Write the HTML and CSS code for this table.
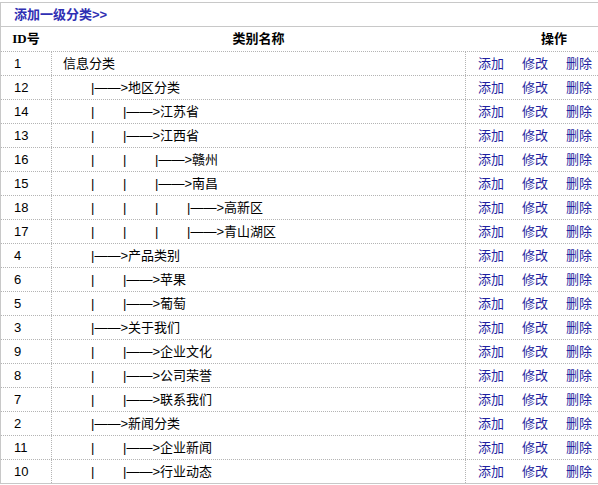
FILE: index.html
```html
<!DOCTYPE html>
<html lang="zh-CN">
<head>
<meta charset="utf-8">
<title>分类管理</title>
<link rel="stylesheet" href="styles.css">
</head>
<body>
<div class="grid">
  <div class="title"><a href="#">添加一级分类&gt;&gt;</a></div>
  <div class="row head">
    <div class="c-id">ID号</div>
    <div class="c-name">类别名称</div>
    <div class="c-ops">操作</div>
  </div>

  <div class="row"><div class="c-id">1</div><div class="c-name">信息分类</div><div class="c-ops"><a href="#">添加</a><a href="#">修改</a><a href="#">删除</a></div></div>
  <div class="row"><div class="c-id">12</div><div class="c-name"><span class="lead"></span><span class="arrow">|——&gt;</span>地区分类</div><div class="c-ops"><a href="#">添加</a><a href="#">修改</a><a href="#">删除</a></div></div>
  <div class="row"><div class="c-id">14</div><div class="c-name"><span class="lead"></span><span class="pipe">|</span><span class="arrow">|——&gt;</span>江苏省</div><div class="c-ops"><a href="#">添加</a><a href="#">修改</a><a href="#">删除</a></div></div>
  <div class="row"><div class="c-id">13</div><div class="c-name"><span class="lead"></span><span class="pipe">|</span><span class="arrow">|——&gt;</span>江西省</div><div class="c-ops"><a href="#">添加</a><a href="#">修改</a><a href="#">删除</a></div></div>
  <div class="row"><div class="c-id">16</div><div class="c-name"><span class="lead"></span><span class="pipe">|</span><span class="pipe">|</span><span class="arrow">|——&gt;</span>赣州</div><div class="c-ops"><a href="#">添加</a><a href="#">修改</a><a href="#">删除</a></div></div>
  <div class="row"><div class="c-id">15</div><div class="c-name"><span class="lead"></span><span class="pipe">|</span><span class="pipe">|</span><span class="arrow">|——&gt;</span>南昌</div><div class="c-ops"><a href="#">添加</a><a href="#">修改</a><a href="#">删除</a></div></div>
  <div class="row"><div class="c-id">18</div><div class="c-name"><span class="lead"></span><span class="pipe">|</span><span class="pipe">|</span><span class="pipe">|</span><span class="arrow">|——&gt;</span>高新区</div><div class="c-ops"><a href="#">添加</a><a href="#">修改</a><a href="#">删除</a></div></div>
  <div class="row"><div class="c-id">17</div><div class="c-name"><span class="lead"></span><span class="pipe">|</span><span class="pipe">|</span><span class="pipe">|</span><span class="arrow">|——&gt;</span>青山湖区</div><div class="c-ops"><a href="#">添加</a><a href="#">修改</a><a href="#">删除</a></div></div>
  <div class="row"><div class="c-id">4</div><div class="c-name"><span class="lead"></span><span class="arrow">|——&gt;</span>产品类别</div><div class="c-ops"><a href="#">添加</a><a href="#">修改</a><a href="#">删除</a></div></div>
  <div class="row"><div class="c-id">6</div><div class="c-name"><span class="lead"></span><span class="pipe">|</span><span class="arrow">|——&gt;</span>苹果</div><div class="c-ops"><a href="#">添加</a><a href="#">修改</a><a href="#">删除</a></div></div>
  <div class="row"><div class="c-id">5</div><div class="c-name"><span class="lead"></span><span class="pipe">|</span><span class="arrow">|——&gt;</span>葡萄</div><div class="c-ops"><a href="#">添加</a><a href="#">修改</a><a href="#">删除</a></div></div>
  <div class="row"><div class="c-id">3</div><div class="c-name"><span class="lead"></span><span class="arrow">|——&gt;</span>关于我们</div><div class="c-ops"><a href="#">添加</a><a href="#">修改</a><a href="#">删除</a></div></div>
  <div class="row"><div class="c-id">9</div><div class="c-name"><span class="lead"></span><span class="pipe">|</span><span class="arrow">|——&gt;</span>企业文化</div><div class="c-ops"><a href="#">添加</a><a href="#">修改</a><a href="#">删除</a></div></div>
  <div class="row"><div class="c-id">8</div><div class="c-name"><span class="lead"></span><span class="pipe">|</span><span class="arrow">|——&gt;</span>公司荣誉</div><div class="c-ops"><a href="#">添加</a><a href="#">修改</a><a href="#">删除</a></div></div>
  <div class="row"><div class="c-id">7</div><div class="c-name"><span class="lead"></span><span class="pipe">|</span><span class="arrow">|——&gt;</span>联系我们</div><div class="c-ops"><a href="#">添加</a><a href="#">修改</a><a href="#">删除</a></div></div>
  <div class="row"><div class="c-id">2</div><div class="c-name"><span class="lead"></span><span class="arrow">|——&gt;</span>新闻分类</div><div class="c-ops"><a href="#">添加</a><a href="#">修改</a><a href="#">删除</a></div></div>
  <div class="row"><div class="c-id">11</div><div class="c-name"><span class="lead"></span><span class="pipe">|</span><span class="arrow">|——&gt;</span>企业新闻</div><div class="c-ops"><a href="#">添加</a><a href="#">修改</a><a href="#">删除</a></div></div>
  <div class="row last"><div class="c-id">10</div><div class="c-name"><span class="lead"></span><span class="pipe">|</span><span class="arrow">|——&gt;</span>行业动态</div><div class="c-ops"><a href="#">添加</a><a href="#">修改</a><a href="#">删除</a></div></div>
</div>
</body>
</html>
```

FILE: styles.css
```css
html, body {
  margin: 0;
  padding: 0;
  background: #fff;
}

body {
  font-family: "Liberation Sans", "Noto Sans CJK SC", sans-serif;
  font-size: 13px;
  color: #000;
}

a {
  text-decoration: none;
}

.grid {
  width: 597px;
  margin-top: 2px;
  border: 1px solid #c8c8c8;
  border-right: none;
}

.title {
  height: 23px;
  line-height: 23px;
  padding-left: 13px;
  border-bottom: 1px solid #c8c8c8;
  font-weight: bold;
}

.title a {
  color: #2f2fb3;
}

.row {
  display: grid;
  grid-template-columns: 50px 414px 1fr;
  height: 23px;
  line-height: 23px;
  border-bottom: 1px dotted #b4b4b4;
}

.row.head {
  height: 24px;
  line-height: 24px;
  font-weight: bold;
  font-family: "Liberation Serif", "Noto Sans CJK SC", serif;
}

.row.last {
  border-bottom: none;
}

.c-id {
  padding-left: 13px;
  white-space: nowrap;
}

.c-name {
  padding-left: 11px;
  border-left: 1px dotted #b4b4b4;
  white-space: nowrap;
}

.c-ops {
  padding-left: 12px;
  border-left: 1px dotted #b4b4b4;
  display: flex;
  gap: 18px;
  white-space: nowrap;
  overflow: hidden;
}

.head .c-id {
  padding-left: 0;
  text-align: center;
}

.head .c-name {
  padding-left: 0;
  text-align: center;
  border-left-color: transparent;
}

.head .c-ops {
  padding-left: 75px;
  border-left-color: transparent;
}

.c-ops a {
  color: #1f1fa0;
}

.lead {
  display: inline-block;
  width: 28px;
}

.pipe {
  display: inline-block;
  width: 32px;
}
```
